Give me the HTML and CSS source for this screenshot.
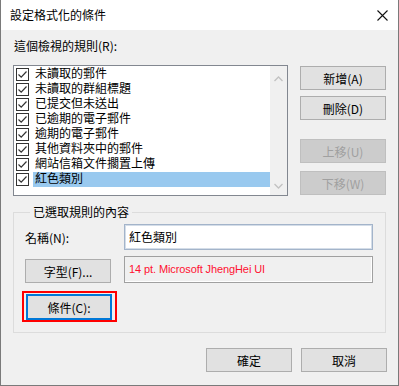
FILE: index.html
```html
<!DOCTYPE html>
<html lang="zh-Hant">
<head>
    <meta charset="UTF-8">
    <meta name="viewport" content="width=device-width, initial-scale=1.0">
    <title>設定格式化的條件</title>
    <link rel="stylesheet" href="styles.css">
</head>
<body>
    <div class="dialog">
        <div class="titlebar">
            <span class="title">設定格式化的條件</span>
            <svg class="close" width="11" height="11" viewBox="0 0 11 11">
                <path d="M0.5 0.5 L10.5 10.5 M10.5 0.5 L0.5 10.5" stroke="#111" stroke-width="1.1" fill="none"/>
            </svg>
        </div>

        <div class="content">
            <div class="rules-label">這個檢視的規則(R):</div>

            <div class="rules-row">
                <div class="rule-list">
                    <div class="items">
                        <div class="item"><span class="check"></span><span class="item-text">未讀取的郵件</span></div>
                        <div class="item"><span class="check"></span><span class="item-text">未讀取的群組標題</span></div>
                        <div class="item"><span class="check"></span><span class="item-text">已提交但未送出</span></div>
                        <div class="item"><span class="check"></span><span class="item-text">已逾期的電子郵件</span></div>
                        <div class="item"><span class="check"></span><span class="item-text">逾期的電子郵件</span></div>
                        <div class="item"><span class="check"></span><span class="item-text">其他資料夾中的郵件</span></div>
                        <div class="item"><span class="check"></span><span class="item-text">網站信箱文件擱置上傳</span></div>
                        <div class="item"><span class="check"></span><span class="item-text selected">紅色類別</span></div>
                    </div>
                    <div class="scrollbar">
                        <svg width="9" height="6" viewBox="0 0 9 6"><path d="M0.5 5 L4.5 1 L8.5 5" stroke="#c2c2c2" stroke-width="1.3" fill="none"/></svg>
                        <svg width="9" height="6" viewBox="0 0 9 6"><path d="M0.5 1 L4.5 5 L8.5 1" stroke="#c2c2c2" stroke-width="1.3" fill="none"/></svg>
                    </div>
                </div>

                <div class="side-buttons">
                    <button class="btn">新增(A)</button>
                    <button class="btn btn-delete">刪除(D)</button>
                    <button class="btn btn-up" disabled>上移(U)</button>
                    <button class="btn btn-down" disabled>下移(W)</button>
                </div>
            </div>

            <fieldset class="group">
                <legend>已選取規則的內容</legend>
                <div class="group-row">
                    <span class="field-label">名稱(N):</span>
                    <div class="name-input">紅色類別</div>
                </div>
                <div class="group-row font-row">
                    <button class="btn">字型(F)...</button>
                    <div class="font-preview">14 pt. Microsoft JhengHei UI</div>
                </div>
                <div class="cond-mark">
                    <button class="btn btn-focus">條件(C):</button>
                </div>
            </fieldset>

            <div class="footer">
                <button class="btn">確定</button>
                <button class="btn">取消</button>
            </div>
        </div>
    </div>
</body>
</html>
```

FILE: styles.css
```css
body {
    margin: 0;
    padding: 0;
    background-color: #f0f0f0;
    font-family: "Noto Sans CJK TC", "Liberation Sans", sans-serif;
    font-size: 12px;
    color: #000000;
}

.dialog {
    width: 399px;
    height: 386px;
    box-sizing: border-box;
    border: 1px solid #7a7a7a;
    border-top: none;
    background-color: #f0f0f0;
    overflow: hidden;
}

/* Titel */
.titlebar {
    height: 30px;
    background-color: #ffffff;
    display: flex;
    align-items: center;
    justify-content: space-between;
    padding: 0 10px 0 9px;
}

.title {
    font-size: 12px;
    line-height: 16px;
}

.content {
    padding: 8px 0 0 12px;
}

.rules-label {
    height: 16px;
    line-height: 16px;
    margin-left: 1px;
}

.rules-row {
    display: flex;
    margin-top: 11px;
}

.rule-list {
    width: 275px;
    height: 131px;
    box-sizing: border-box;
    border: 1px solid #828790;
    background-color: #ffffff;
    display: flex;
}

.items {
    flex: 1;
    padding-top: 1px;
}

.item {
    height: 15px;
    display: flex;
    align-items: center;
    overflow: hidden;
    font-family: "Liberation Sans", "Noto Sans CJK TC", sans-serif;
}

.check {
    width: 13px;
    height: 13px;
    box-sizing: border-box;
    margin-left: 2px;
    border: 1px solid #333333;
    background: #ffffff url("data:image/svg+xml;utf8,<svg xmlns='http://www.w3.org/2000/svg' width='11' height='11'><path d='M1.5 5.5 L4.2 8.2 L9.5 2.5' stroke='%23333' stroke-width='1.2' fill='none'/></svg>") no-repeat center;
}

.item-text {
    margin-left: 4px;
    padding-left: 2px;
    height: 15px;
    line-height: 15px;
}

.selected {
    flex: 1;
    background-color: #99c9ef;
}

.scrollbar {
    width: 17px;
    background-color: #f0f0f0;
    display: flex;
    flex-direction: column;
    align-items: center;
    justify-content: space-between;
    padding: 10px 0 6px;
}

.side-buttons {
    display: flex;
    flex-direction: column;
    margin-left: 12px;
    padding-top: 1px;
}

.btn {
    width: 86px;
    height: 24px;
    box-sizing: border-box;
    border: 1px solid #adadad;
    background-color: #e1e1e1;
    font-family: "Noto Sans CJK TC", "Liberation Sans", sans-serif;
    font-size: 12px;
    color: #000000;
    padding: 0;
}

.btn-delete {
    margin-top: 6px;
}

.btn-up {
    margin-top: 19px;
}

.btn-down {
    margin-top: 8px;
}

.btn:disabled {
    background-color: #cccccc;
    border-color: #bfbfbf;
    color: #a0a0a0;
}

.group {
    width: 373px;
    box-sizing: border-box;
    margin: 8px 0 0 0;
    padding: 4px 12px 10px 11px;
    border: 1px solid #dcdcdc;
}

.group legend {
    padding: 0 3px;
    margin-left: 5px;
    line-height: 16px;
}

.group-row {
    display: flex;
    align-items: center;
}

.field-label {
    width: 99px;
}

.name-input {
    width: 249px;
    height: 26px;
    box-sizing: border-box;
    border: 1px solid #a3b4ca;
    box-shadow: inset 0 0 0 1px #d4dde8;
    background-color: #ffffff;
    padding-left: 4px;
    line-height: 24px;
}

.font-row {
    margin-top: 6px;
    align-items: flex-start;
}

.font-row .btn {
    margin-top: 3px;
    margin-right: 13px;
}

.font-preview {
    width: 249px;
    height: 27px;
    box-sizing: border-box;
    border: 1px solid #a0a0a0;
    box-shadow: inset -1px -1px 0 #ffffff;
    padding-left: 4px;
    line-height: 25px;
    color: #ff1030;
    font-family: "Liberation Sans", sans-serif;
    font-size: 11px;
    letter-spacing: -0.1px;
}

.cond-mark {
    width: 95px;
    height: 31px;
    box-sizing: border-box;
    margin: 8px 0 0 -3px;
    border: 2px solid #ff0000;
    padding: 1px 0 0 2px;
}

.btn-focus {
    height: 26px;
    border: 2px solid #0078d7;
}

.footer {
    display: flex;
    justify-content: flex-end;
    gap: 9px;
    width: 374px;
    margin-top: 15px;
}
```
